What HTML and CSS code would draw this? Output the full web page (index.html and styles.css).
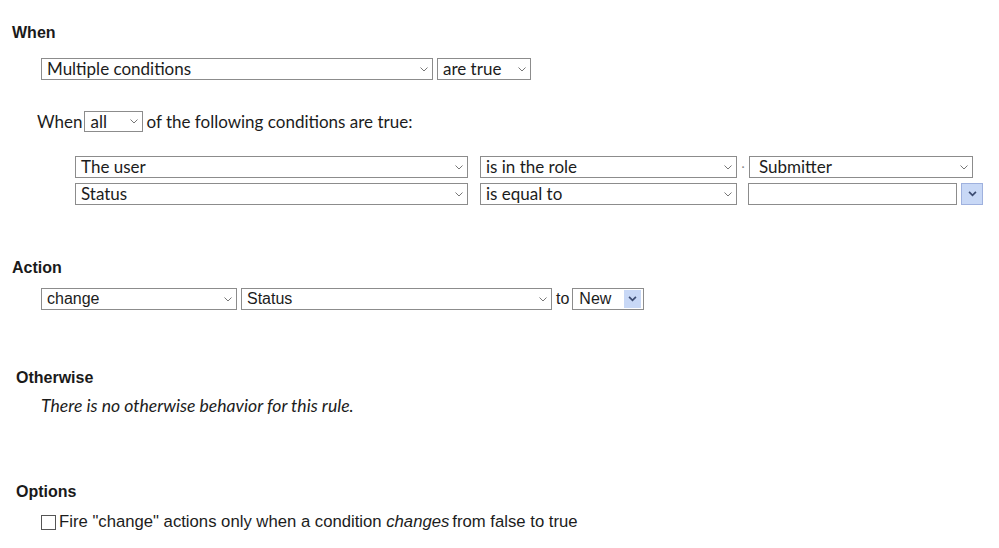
FILE: index.html
```html
<!DOCTYPE html>
<html>
<head>
<meta charset="utf-8">
<link rel="stylesheet" href="styles.css">
</head>
<body>
<div class="page">
  <section class="when">
    <h2 class="heading">When</h2>
    <div class="row top-row">
      <div class="sel w-multi"><span>Multiple conditions</span><svg class="chev" viewBox="0 0 8 5"><path d="M0.5 0.5 L4 4 L7.5 0.5"/></svg></div>
      <div class="sel w-aretrue"><span>are true</span><svg class="chev" viewBox="0 0 8 5"><path d="M0.5 0.5 L4 4 L7.5 0.5"/></svg></div>
    </div>
    <div class="row all-row">
      <span class="label">When</span>
      <div class="sel w-all"><span>all</span><svg class="chev" viewBox="0 0 8 5"><path d="M0.5 0.5 L4 4 L7.5 0.5"/></svg></div>
      <span class="label">of the following conditions are true:</span>
    </div>
    <div class="conditions">
      <div class="cond">
        <div class="sel c-field"><span>The user</span><svg class="chev" viewBox="0 0 8 5"><path d="M0.5 0.5 L4 4 L7.5 0.5"/></svg></div>
        <div class="sel c-op"><span>is in the role</span><svg class="chev" viewBox="0 0 8 5"><path d="M0.5 0.5 L4 4 L7.5 0.5"/></svg></div>
        <span class="dot">·</span>
        <div class="sel c-val"><span>Submitter</span><svg class="chev" viewBox="0 0 8 5"><path d="M0.5 0.5 L4 4 L7.5 0.5"/></svg></div>
      </div>
      <div class="cond">
        <div class="sel c-field"><span>Status</span><svg class="chev" viewBox="0 0 8 5"><path d="M0.5 0.5 L4 4 L7.5 0.5"/></svg></div>
        <div class="sel c-op"><span>is equal to</span><svg class="chev" viewBox="0 0 8 5"><path d="M0.5 0.5 L4 4 L7.5 0.5"/></svg></div>
        <div class="combo">
          <div class="txt c-input"></div>
          <div class="btn"><svg viewBox="0 0 10 7"><path d="M1 1 L5 5 L9 1"/></svg></div>
        </div>
      </div>
    </div>
  </section>

  <section class="action">
    <h2 class="heading">Action</h2>
    <div class="row act-row">
      <div class="sel a-change"><span>change</span><svg class="chev" viewBox="0 0 8 5"><path d="M0.5 0.5 L4 4 L7.5 0.5"/></svg></div>
      <div class="sel a-status"><span>Status</span><svg class="chev" viewBox="0 0 8 5"><path d="M0.5 0.5 L4 4 L7.5 0.5"/></svg></div>
      <span class="to">to</span>
      <div class="sel a-new"><span>New</span><div class="btn small"><svg viewBox="0 0 10 7"><path d="M1 1 L5 5 L9 1"/></svg></div></div>
    </div>
  </section>

  <section class="otherwise">
    <h2 class="heading sub">Otherwise</h2>
    <p class="note">There is no otherwise behavior for this rule.</p>
  </section>

  <section class="options">
    <h2 class="heading sub">Options</h2>
    <label class="opt"><span class="box"></span><span class="opt-text">Fire "change" actions only when a condition <em>changes</em>from false to true</span></label>
  </section>
</div>
</body>
</html>
```

FILE: styles.css
```css
* { box-sizing: border-box; }
html, body { margin: 0; padding: 0; background: #fff; }
body {
  font-family: Lato, "Noto Sans", sans-serif;
  font-size: 17px;
  color: #1c1c1c;
}
.page { padding: 24px 0 0 12px; width: 999px; height: 548px; overflow: hidden; }

.heading {
  margin: 0;
  font-family: "Liberation Sans", Arial, sans-serif;
  font-weight: bold;
  font-size: 16px;
  line-height: 18px;
  color: #1a1a1a;
}
.heading.sub { padding-left: 4px; }

.row { display: flex; align-items: center; }

.sel {
  display: flex;
  align-items: center;
  justify-content: space-between;
  height: 22px;
  border: 1px solid #8c8c8c;
  background: #fff;
  padding: 0 4px 0 5px;
  font-size: 17px;
  line-height: 20px;
  color: #1c1c1c;
  white-space: nowrap;
}
.chev {
  width: 8px;
  height: 5px;
  fill: none;
  stroke: #777;
  stroke-width: 1;
  flex: none;
}

.top-row { margin: 16px 0 0 29px; gap: 4px; }
.w-multi { width: 392px; }
.w-aretrue { width: 94px; }

.all-row { margin: 31px 0 0 25px; }
.all-row .label { font-size: 17px; }
.w-all { width: 59px; margin: 0 3px 0 2px; padding-left: 5px; height: 21px; }

.conditions { margin: 24px 0 0 63px; display: flex; flex-direction: column; gap: 5px; }
.cond { display: flex; align-items: center; }
.c-field { width: 393px; }
.c-op { width: 257px; margin-left: 12px; }
.dot { width: 12px; text-align: center; color: #888; font-size: 12px; line-height: 20px; }
.c-val { width: 224px; padding-left: 9px; }
.combo { display: flex; align-items: center; margin-left: 11px; gap: 4px; }
.c-input { width: 209px; height: 22px; border: 1px solid #8c8c8c; background: #fff; }

.btn {
  width: 22px;
  height: 22px;
  background: #c8d8f6;
  border: 1px solid #9fb1de;
  display: flex;
  align-items: center;
  justify-content: center;
}
.btn svg { width: 9px; height: 6px; fill: none; stroke: #3c4c72; stroke-width: 2; }

.action { margin-top: 54px; }
.act-row { margin: 11px 0 0 29px; font-family: "Liberation Sans", Arial, sans-serif; }
.act-row .sel { font-family: "Liberation Sans", Arial, sans-serif; font-size: 16px; }
.a-change { width: 196px; }
.a-status { width: 311px; margin-left: 4px; }
.to { margin: 0 3px 0 4px; font-size: 16px; }
.a-new { width: 72px; padding: 0 2px 0 6px; height: 22px; }
.btn.small { width: 17px; height: 18px; border: none; background: #c8d8f6; }

.otherwise { margin-top: 59px; }
.note {
  margin: 8px 0 0 29px;
  font-style: italic;
  font-size: 17.6px;
  line-height: 21px;
  color: #1c1c1c;
}

.options { margin-top: 67px; }
.opt {
  display: flex;
  align-items: center;
  margin: 11px 0 0 29px;
  font-family: "Liberation Sans", Arial, sans-serif;
  font-size: 16.7px;
  line-height: 20px;
  color: #1c1c1c;
}
.opt em { margin-right: 3px; }
.box {
  width: 15px;
  height: 15px;
  border: 1px solid #555;
  background: #fff;
  margin-right: 3px;
  flex: none;
}
```
